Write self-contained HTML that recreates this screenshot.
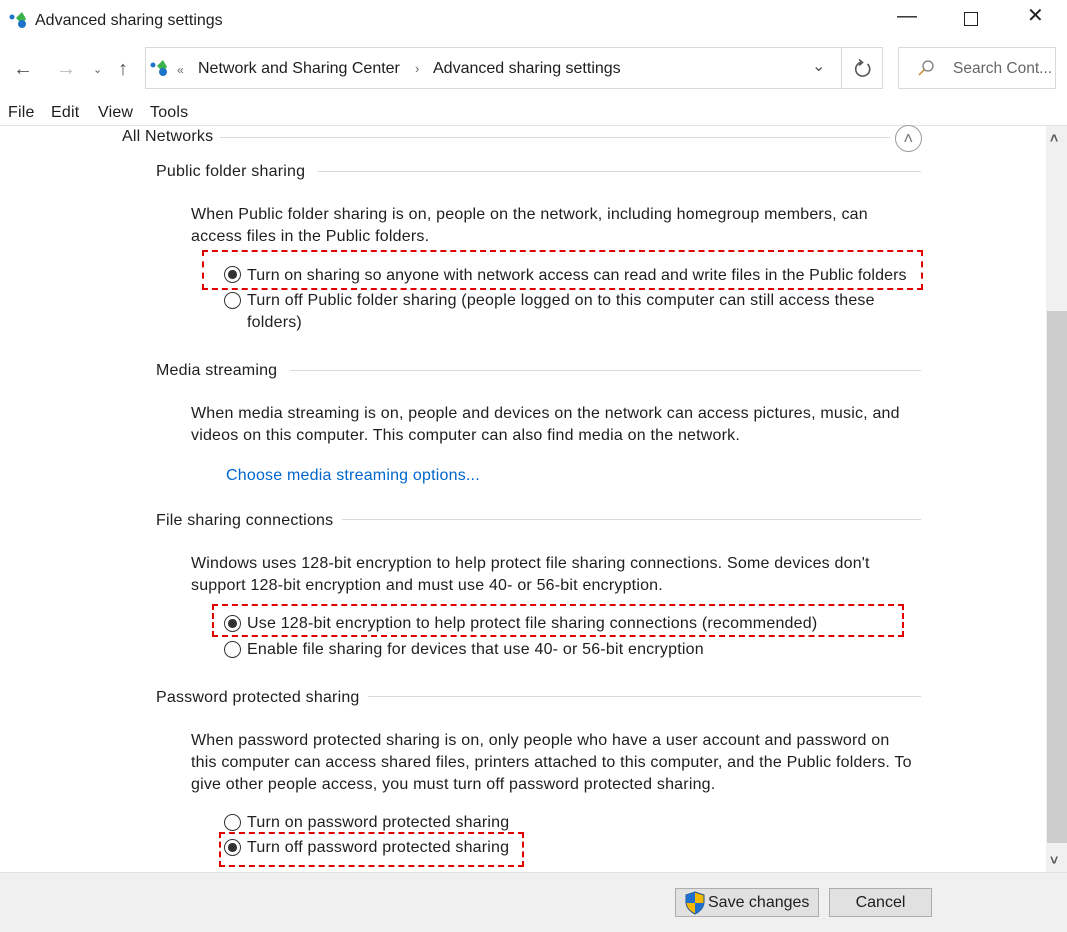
<!DOCTYPE html>
<html><head><meta charset="utf-8"><style>
*{margin:0;padding:0;box-sizing:border-box}
body{width:1067px;height:932px;background:#fff;font-family:"Liberation Sans",sans-serif;font-size:16px;letter-spacing:.2px;color:#1e1e1e;position:relative;overflow:hidden}
.a{position:absolute;white-space:nowrap;line-height:20px}
.t{margin-top:2px}
.ln{position:absolute;height:1px;background:#d9d9d9}
.r{position:absolute;width:17px;height:17px;border:1.3px solid #333;border-radius:50%;background:#fff}
.r.on::after{content:"";position:absolute;left:3px;top:3px;width:8.5px;height:8.5px;border-radius:50%;background:#333}
.box{position:absolute;border:2px dashed #e00000}
.btn{position:absolute;border:1px solid #adadad;background:#e1e1e1;text-align:center;line-height:26px;font-size:16px;letter-spacing:0}
</style></head><body>
<!-- title -->
<svg class="a" style="left:8px;top:10px" width="20" height="20"><circle cx="4" cy="7" r="2.5" fill="#1e74c8"/><path d="M8 8 L14 2 L18 9 L14 14 Z" fill="#3bb34a"/><circle cx="14" cy="14" r="4" fill="#1e74c8"/></svg>
<div class="a" style="left:35px;top:11px;letter-spacing:0">Advanced sharing settings</div>
<div class="a" style="left:897px;top:6px;font-size:20px;color:#222">&#8212;</div>
<div class="a" style="left:964px;top:12px;width:14px;height:14px;border:1px solid #222"></div>
<div class="a" style="left:1027px;top:6px;font-size:20px;color:#222">&#10005;</div>
<!-- nav -->
<div class="a" style="left:13px;top:59px;font-size:20px;color:#555">&#8592;</div>
<div class="a" style="left:56px;top:59px;font-size:20px;color:#bbb">&#8594;</div>
<div class="a" style="left:93px;top:60px;font-size:11px;color:#555">&#8964;</div>
<div class="a" style="left:118px;top:59px;font-size:20px;color:#555">&#8593;</div>
<div class="a" style="left:145px;top:47px;width:738px;height:42px;border:1px solid #d9d9d9"></div>
<div class="a" style="left:841px;top:47px;width:1px;height:42px;background:#d9d9d9"></div>
<svg class="a" style="left:149px;top:58px" width="20" height="20"><circle cx="4" cy="7" r="2.5" fill="#1e74c8"/><path d="M8 8 L14 2 L18 9 L14 14 Z" fill="#3bb34a"/><circle cx="14" cy="14" r="4" fill="#1e74c8"/></svg>
<div class="a" style="left:177px;top:60px;font-size:12px;color:#666">&laquo;</div>
<div class="a" style="left:198px;top:59px;font-size:16px;letter-spacing:0">Network and Sharing Center</div>
<div class="a" style="left:415px;top:59px;font-size:13px;color:#666">&#8250;</div>
<div class="a" style="left:433px;top:59px;font-size:16px;letter-spacing:0">Advanced sharing settings</div>
<div class="a" style="left:812px;top:57px;font-size:16px;color:#555">&#8964;</div>
<svg class="a" style="left:853px;top:59px" width="20" height="20"><path d="M14.5 5 A7 7 0 1 1 8 3.3" fill="none" stroke="#555" stroke-width="1.6"/><path d="M6 0.5 L9.5 3.5 L6 6.5" fill="none" stroke="#555" stroke-width="1.6"/></svg>
<div class="a" style="left:898px;top:47px;width:158px;height:42px;border:1px solid #d9d9d9"></div>
<svg class="a" style="left:917px;top:59px" width="18" height="18"><circle cx="11" cy="7" r="5" fill="none" stroke="#777" stroke-width="1.3"/><path d="M7.5 10.5 L2 16" stroke="#c58a2a" stroke-width="1.5"/></svg>
<div class="a" style="left:953px;top:59px;color:#666;font-size:15.5px;letter-spacing:0">Search Cont...</div>
<!-- menu -->
<div class="a" style="left:8px;top:103px">File</div>
<div class="a" style="left:51px;top:103px">Edit</div>
<div class="a" style="left:98px;top:103px">View</div>
<div class="a" style="left:150px;top:103px">Tools</div>
<div class="ln" style="left:0;top:125px;width:1067px;background:#e3e3e3"></div>
<!-- scrollbar -->
<div class="a" style="left:1046px;top:126px;width:21px;height:746px;background:#f0f0f0"></div>
<div class="a" style="left:1047px;top:311px;width:20px;height:532px;background:#cdcdcd"></div>
<div class="a" style="left:1050px;top:128px;font-size:14px;color:#555;font-weight:bold">&#708;</div>
<div class="a" style="left:1050px;top:850px;font-size:14px;color:#555;font-weight:bold">&#709;</div>
<!-- content -->
<div class="a" style="left:122px;top:127px">All Networks</div>
<div class="ln" style="left:220px;top:137px;width:670px"></div>
<div class="a" style="left:895px;top:125px;width:27px;height:27px;border:1.3px solid #999;border-radius:50%;line-height:25px;text-align:center;color:#777;font-size:17px">&#708;</div>

<div class="a" style="left:156px;top:162px">Public folder sharing</div>
<div class="ln" style="left:318px;top:171px;width:603px"></div>
<div class="a" style="left:191px;top:205px">When Public folder sharing is on, people on the network, including homegroup members, can</div>
<div class="a" style="left:191px;top:227px">access files in the Public folders.</div>
<div class="r on" style="left:224px;top:266px"></div>
<div class="a" style="left:247px;top:266px;letter-spacing:.1px">Turn on sharing so anyone with network access can read and write files in the Public folders</div>
<div class="box" style="left:202px;top:250px;width:721px;height:40px"></div>
<div class="r" style="left:224px;top:292px"></div>
<div class="a" style="left:247px;top:291px">Turn off Public folder sharing (people logged on to this computer can still access these</div>
<div class="a" style="left:247px;top:313px">folders)</div>

<div class="a" style="left:156px;top:361px">Media streaming</div>
<div class="ln" style="left:290px;top:370px;width:631px"></div>
<div class="a" style="left:191px;top:404px">When media streaming is on, people and devices on the network can access pictures, music, and</div>
<div class="a" style="left:191px;top:426px">videos on this computer. This computer can also find media on the network.</div>
<div class="a" style="left:226px;top:466px;color:#0066cc">Choose media streaming options...</div>

<div class="a" style="left:156px;top:511px">File sharing connections</div>
<div class="ln" style="left:342px;top:519px;width:579px"></div>
<div class="a" style="left:191px;top:554px">Windows uses 128-bit encryption to help protect file sharing connections. Some devices don't</div>
<div class="a" style="left:191px;top:576px">support 128-bit encryption and must use 40- or 56-bit encryption.</div>
<div class="r on" style="left:224px;top:615px"></div>
<div class="a" style="left:247px;top:614px">Use 128-bit encryption to help protect file sharing connections (recommended)</div>
<div class="box" style="left:212px;top:604px;width:692px;height:33px"></div>
<div class="r" style="left:224px;top:641px"></div>
<div class="a" style="left:247px;top:640px">Enable file sharing for devices that use 40- or 56-bit encryption</div>

<div class="a" style="left:156px;top:688px">Password protected sharing</div>
<div class="ln" style="left:368px;top:696px;width:553px"></div>
<div class="a" style="left:191px;top:731px">When password protected sharing is on, only people who have a user account and password on</div>
<div class="a" style="left:191px;top:753px">this computer can access shared files, printers attached to this computer, and the Public folders. To</div>
<div class="a" style="left:191px;top:775px">give other people access, you must turn off password protected sharing.</div>
<div class="r" style="left:224px;top:814px"></div>
<div class="a" style="left:247px;top:813px">Turn on password protected sharing</div>
<div class="r on" style="left:224px;top:839px"></div>
<div class="a" style="left:247px;top:838px">Turn off password protected sharing</div>
<div class="box" style="left:219px;top:832px;width:305px;height:35px"></div>

<!-- bottom -->
<div class="a" style="left:0;top:872px;width:1067px;height:60px;background:#f0f0f0;border-top:1px solid #e0e0e0"></div>
<div class="btn" style="left:675px;top:888px;width:144px;height:29px;text-align:left;padding-left:32px;line-height:28px">Save changes</div>
<svg class="a" style="left:684px;top:891px" width="22" height="24"><path d="M11 1 L20 4 V11 C20 17 15 21 11 23 C7 21 2 17 2 11 V4 Z" fill="#f5b800" stroke="#1b4f8f" stroke-width="1"/><path d="M11 1 V12 H2 V4 Z" fill="#1f6fcf"/><path d="M11 12 H20 C20 17 15 21 11 23 Z" fill="#1f6fcf"/></svg>
<div class="btn" style="left:829px;top:888px;width:103px;height:29px;line-height:28px">Cancel</div>
</body></html>
